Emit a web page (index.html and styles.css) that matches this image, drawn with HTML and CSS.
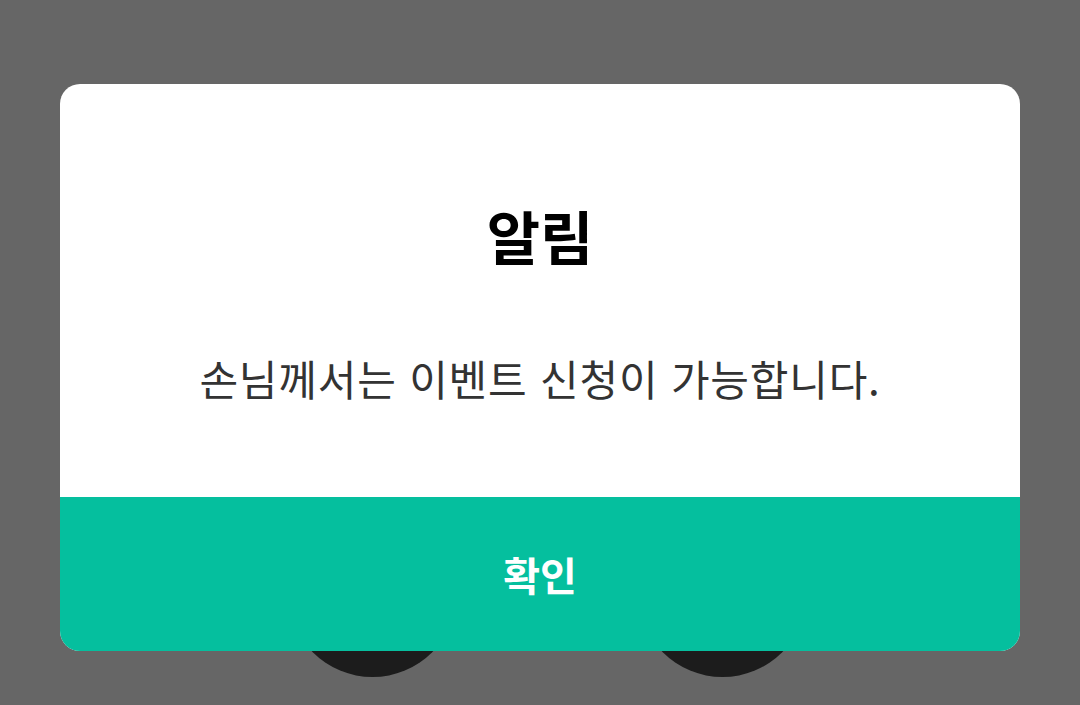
FILE: index.html
```html
<!DOCTYPE html>
<html lang="ko">
<head>
    <meta charset="UTF-8">
    <meta name="viewport" content="width=device-width, initial-scale=1.0">
    <title>알림</title>
    <link rel="stylesheet" href="styles.css">
</head>
<body>
    <div id="backdrop">
        <div class="dot dot-left"></div>
        <div class="dot dot-right"></div>
    </div>
    <div id="dialog">
        <div class="dialog-body">
            <h1 class="dialog-title">알림</h1>
            <p class="dialog-message">손님께서는 이벤트 신청이 가능합니다.</p>
        </div>
        <button class="dialog-button">확인</button>
    </div>
</body>
</html>
```

FILE: styles.css
```css
html, body {
    margin: 0;
    height: 100%;
}
body {
    font-family: "Noto Sans CJK KR", "Noto Sans", sans-serif;
    background-color: #666666;
    position: relative;
    overflow: hidden;
    padding-top: 84px;
    box-sizing: border-box;
}
#backdrop {
    position: absolute;
    inset: 0;
}
.dot {
    position: absolute;
    top: 508px;
    width: 169px;
    height: 169px;
    border-radius: 50%;
    background: #1c1c1c;
}
.dot-left {
    left: 288px;
}
.dot-right {
    left: 638px;
}
#dialog {
    position: relative;
    width: 960px;
    margin: 0 auto;
    background: #fff;
    border-radius: 20px;
    overflow: hidden;
}
.dialog-body {
    padding: 111px 20px 91px;
    text-align: center;
}
.dialog-title {
    margin: 0;
    font-size: 58px;
    font-weight: 700;
    line-height: 80px;
    color: #000;
}
.dialog-message {
    margin: 75px 0 0;
    font-size: 42px;
    font-weight: 400;
    line-height: 56px;
    letter-spacing: 0.8px;
    color: #333;
}
.dialog-button {
    display: flex;
    align-items: center;
    justify-content: center;
    width: 100%;
    height: 154px;
    border: none;
    background: #05bf9e;
    color: #fff;
    font-family: inherit;
    font-size: 40px;
    font-weight: 700;
    padding: 0;
}
```
